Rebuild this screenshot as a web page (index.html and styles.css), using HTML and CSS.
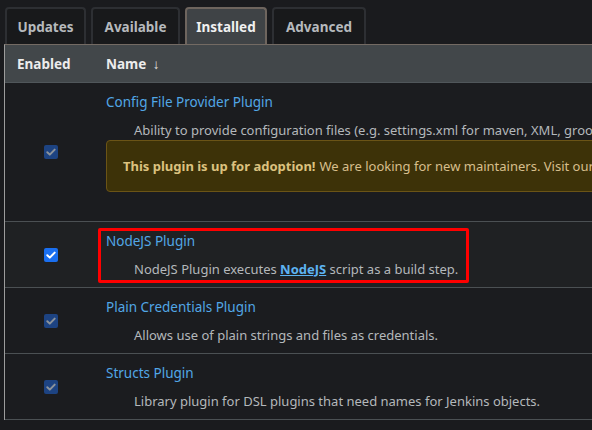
FILE: index.html
```html
<!DOCTYPE html>
<html>
<head>
<meta charset="utf-8">
<link rel="stylesheet" href="styles.css">
</head>
<body>
<div class="tabs">
  <div class="tab">Updates</div>
  <div class="tab">Available</div>
  <div class="tab active">Installed</div>
  <div class="tab">Advanced</div>
</div>
<div class="table">
  <div class="head">
    <div class="c1">Enabled</div>
    <div class="c2">Name <span class="arrow">↓</span></div>
  </div>
  <div class="row r1">
    <div class="c1"><span class="cb dis"><svg viewBox="0 0 14 14"><path d="M3.3 7.2 L5.8 9.6 L10.7 4.6" /></svg></span></div>
    <div class="c2">
      <div class="title">Config File Provider Plugin</div>
      <div class="desc">Ability to provide configuration files (e.g. settings.xml for maven, XML, groovy, custom files, etc.) loaded through the UI</div>
      <div class="warn"><b>This plugin is up for adoption!</b> We are looking for new maintainers. Visit our Adopt a Plugin initiative for more information.</div>
    </div>
  </div>
  <div class="row r2">
    <div class="c1"><span class="cb on"><svg viewBox="0 0 14 14"><path d="M3.3 7.2 L5.8 9.6 L10.7 4.6" /></svg></span></div>
    <div class="c2">
      <div class="title">NodeJS Plugin</div>
      <div class="desc">NodeJS Plugin executes <a class="link">NodeJS</a> script as a build step.</div>
    </div>
    <div class="highlight"></div>
  </div>
  <div class="row r3">
    <div class="c1"><span class="cb dis"><svg viewBox="0 0 14 14"><path d="M3.3 7.2 L5.8 9.6 L10.7 4.6" /></svg></span></div>
    <div class="c2">
      <div class="title">Plain Credentials Plugin</div>
      <div class="desc">Allows use of plain strings and files as credentials.</div>
    </div>
  </div>
  <div class="row r4">
    <div class="c1"><span class="cb dis"><svg viewBox="0 0 14 14"><path d="M3.3 7.2 L5.8 9.6 L10.7 4.6" /></svg></span></div>
    <div class="c2">
      <div class="title">Structs Plugin</div>
      <div class="desc">Library plugin for DSL plugins that need names for Jenkins objects.</div>
    </div>
  </div>
</div>
</body>
</html>
```

FILE: styles.css
```css
html, body {
  margin: 0;
  padding: 0;
  background: #1a1b1e;
  overflow: hidden;
  width: 592px;
  height: 430px;
}
body {
  font-family: "Noto Sans", "Open Sans", sans-serif;
  font-size: 13px;
  color: #b9bcc0;
  white-space: nowrap;
}
.tabs {
  display: flex;
  align-items: flex-end;
  gap: 5px;
  padding: 7px 0 0 5px;
  height: 44px;
  box-sizing: border-box;
}
.tab {
  box-sizing: border-box;
  height: 37px;
  padding: 0 12px;
  display: flex;
  align-items: center;
  justify-content: center;
  border: 2px solid #2d2f33;
  border-bottom: none;
  border-radius: 4px 4px 0 0;
  background: #18191b;
  color: #b6b9bd;
  font-weight: 700;
  font-size: 13.5px;
}
.tab:nth-child(1) { width: 81px; }
.tab:nth-child(2) { width: 89px; }
.tab:nth-child(3) { width: 82px; }
.tab:nth-child(4) { width: 94px; }
.tab.active {
  background: #3f4346;
  border-color: #6e655e;
  color: #f0f0f0;
}
.table {
  margin-left: 4px;
  width: 760px;
  border-left: 1px solid #9c9c9c;
  border-top: 1px solid #736a63;
}
.head {
  display: grid;
  grid-template-columns: 89px 1fr;
  height: 37px;
  align-items: center;
  background: #42474a;
  border-bottom: 1px solid #50565a;
  color: #ececec;
  font-weight: 700;
  font-size: 13.5px;
}
.head .c1 { padding-left: 12px; }
.head .c2 { padding-left: 12px; }
.arrow { font-weight: 400; margin-left: 3px; }
.row {
  position: relative;
  display: grid;
  grid-template-columns: 89px 1fr;
  align-items: center;
  border-bottom: 1px solid #4b5053;
  background: #1b1c1f;
}
.row.r2 { background: #1f2123; }
.row .c1 {
  display: flex;
  justify-content: center;
  padding-left: 2px;
}
.row .c2 {
  padding: 9px 0 0 12px;
}
.r1 { height: 138px; }
.r1 .c2 { align-self: start; }
.r2, .r3, .r4 { height: 65px; }
.r2 .c2, .r3 .c2, .r4 .c2 { align-self: start; }
.title {
  color: #52a7e6;
  font-size: 13.5px;
  line-height: 20px;
}
.desc {
  padding-left: 28px;
  margin-top: 8px;
  line-height: 20px;
  color: #b4b8bb;
}
.link {
  color: #5db3f2;
  font-weight: 700;
  text-decoration: underline;
}
.warn {
  margin-top: 0;
  height: 52px;
  box-sizing: border-box;
  display: flex;
  align-items: center;
  padding-left: 16px;
  background: #3d3208;
  border: 1px solid #6b5416;
  border-radius: 4px;
  color: #d7bf8c;
}
.warn b { color: #dcc27f; margin-right: 4px; }
.cb {
  width: 14px;
  height: 14px;
  border-radius: 2px;
  display: inline-flex;
}
.cb svg { width: 14px; height: 14px; }
.cb path {
  fill: none;
  stroke-width: 2;
  stroke-linecap: round;
  stroke-linejoin: round;
}
.cb.dis { background: #1d4382; }
.cb.dis path { stroke: #8c939b; }
.cb.on { background: #1a6ff0; }
.cb.on path { stroke: #ffffff; }
.highlight {
  position: absolute;
  left: 93px;
  top: 6px;
  width: 371px;
  height: 55px;
  border: 3px solid #ff0000;
  border-radius: 2px;
  box-sizing: border-box;
}
```
